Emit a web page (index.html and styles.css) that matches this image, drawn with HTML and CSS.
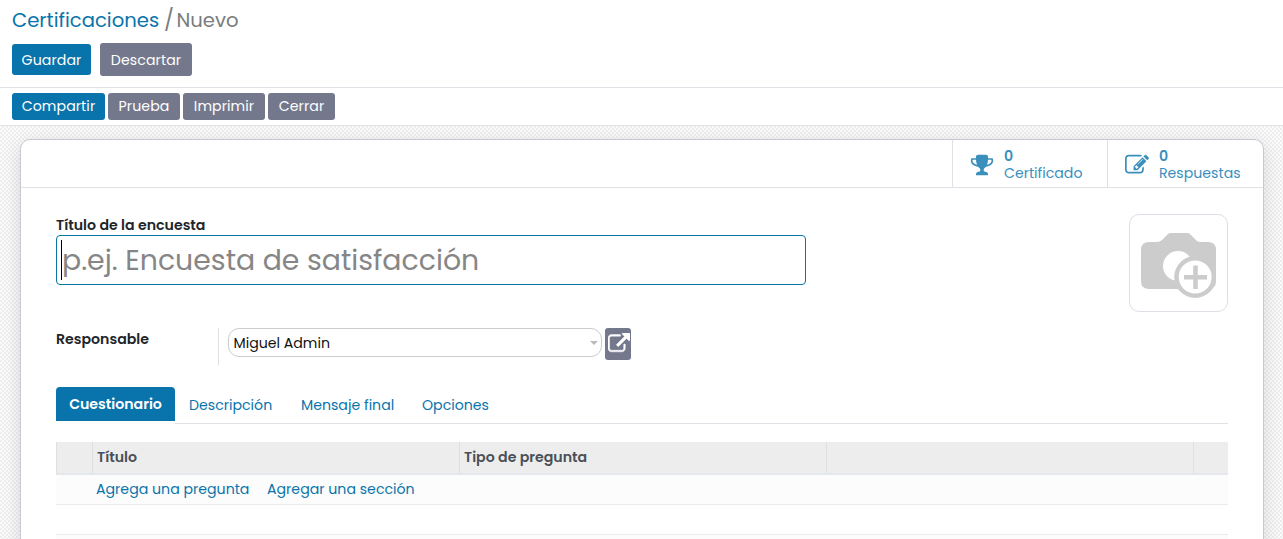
FILE: index.html
```html
<!DOCTYPE html>
<html lang="es">
<head>
<meta charset="utf-8">
<title>Certificaciones</title>
<link rel="stylesheet" href="styles.css">
</head>
<body>
<header class="control-panel">
  <nav class="breadcrumb"><a class="crumb">Certificaciones</a><span class="slash">/</span><span class="current">Nuevo</span></nav>
  <div class="actions">
    <button class="btn primary save">Guardar</button>
    <button class="btn discard">Descartar</button>
  </div>
</header>
<div class="statusbar">
  <button class="btn primary share">Compartir</button>
  <button class="btn test">Prueba</button>
  <button class="btn print">Imprimir</button>
  <button class="btn close">Cerrar</button>
</div>
<main class="content">
  <section class="sheet">
    <div class="button-box">
      <a class="stat">
        <svg class="stat-icon" viewBox="0 0 1792 1792"><path d="M522 883q-74-162-74-371h-256v96q0 78 94.500 162t235.500 113zm1078-275v-96h-256q0 209-74 371 141-29 235.500-113t94.500-162zm128-128v128q0 71-41.500 143t-112 130-173 97.500-215.500 44.500q-42 54-95 95-38 34-52.500 72.500t-14.500 89.500q0 54 30.500 91t97.500 37q75 0 133.500 45.500t58.500 114.500v64q0 14-9 23t-23 9h-832q-14 0-23-9t-9-23v-64q0-69 58.500-114.500t133.500-45.500q67 0 97.500-37t30.500-91q0-51-14.500-89.500t-52.500-72.500q-53-41-95-95-113-5-215.500-44.500t-173-97.500-112-130-41.500-143v-128q0-40 28-68t68-28h288v-96q0-66 47-113t113-47h576q66 0 113 47t47 113v96h288q40 0 68 28t28 68z"/></svg>
        <span class="stat-text"><b>0</b><span class="stat-label cert">Certificado</span></span>
      </a>
      <a class="stat">
        <svg class="stat-icon" viewBox="0 0 1792 1792"><path d="M888 1184l116-116-152-152-116 116v56h96v96h56zm440-720q-16-16-33 1l-350 350q-17 17-1 33t33-1l350-350q17-17 1-33zm80 594v190q0 119-84.500 203.500t-203.500 84.500h-832q-119 0-203.500-84.500t-84.500-203.500v-832q0-119 84.500-203.500t203.500-84.500h832q63 0 117 25 15 7 18 23 3 17-9 29l-49 49q-14 14-32 8-23-6-45-6h-832q-66 0-113 47t-47 113v832q0 66 47 113t113 47h832q66 0 113-47t47-113v-126q0-13 9-22l64-64q15-15 35-7t20 29zm-96-738l288 288-672 672h-288v-288zm444 132l-92 92-288-288 92-92q28-28 68-28t68 28l152 152q28 28 28 68t-28 68z"/></svg>
        <span class="stat-text"><b>0</b><span class="stat-label resp">Respuestas</span></span>
      </a>
    </div>
    <div class="form">
      <div class="heading">
        <div class="title-field">
          <label class="label title-label">Título de la encuesta</label>
          <div class="title-input"><span class="caret"></span><span class="placeholder">p.ej. Encuesta de satisfacción</span></div>
        </div>
        <div class="avatar">
          <svg viewBox="0 0 97 96">
            <path fill="#ccc" d="M19 27H27Q30 27 32 25L38 19Q39 18 41 18H57Q59 18 60 19L67 26Q68 27 71 27H78Q86 27 86 35V66Q86 74 78 74H19Q11 74 11 66V35Q11 27 19 27Z"/>
            <circle cx="48" cy="51" r="15" fill="#fff"/>
            <circle cx="65.200" cy="62" r="18.700" fill="#fff" stroke="#ccc" stroke-width="4.500"/>
            <path d="M65.500 50.500V74M54 62.300H77" stroke="#ccc" stroke-width="4.600"/>
          </svg>
        </div>
      </div>
      <div class="group">
        <label class="label resp-label">Responsable</label>
        <div class="field">
          <div class="select"><span class="miguel">Miguel Admin</span><i class="arrow"></i></div>
          <button class="external"><svg viewBox="0 0 1792 1792"><path d="M1408 928v320q0 119-84.500 203.500t-203.500 84.500h-832q-119 0-203.500-84.500t-84.500-203.500v-832q0-119 84.500-203.500t203.500-84.500h704q14 0 23 9t9 23v64q0 14-9 23t-23 9h-704q-66 0-113 47t-47 113v832q0 66 47 113t113 47h832q66 0 113-47t47-113v-320q0-14 9-23t23-9h64q14 0 23 9t9 23zm384-864v512q0 26-19 45t-45 19-45-19l-176-176-652 652q-10 10-23 10t-23-10l-114-114q-10-10-10-23t10-23l652-652-176-176q-19-19-19-45t19-45 45-19h512q26 0 45 19t19 45z"/></svg></button>
        </div>
      </div>
      <nav class="tabs">
        <a class="tab active">Cuestionario</a>
        <div class="tab-rest"><a class="tab t-desc">Descripción</a><a class="tab t-msg">Mensaje final</a><a class="tab t-opt">Opciones</a></div>
      </nav>
      <div class="table">
        <div class="thead"><span></span><span class="h-title">Título</span><span class="h-type">Tipo de pregunta</span><span></span><span></span></div>
        <div class="row links"><a class="add-q">Agrega una pregunta</a><a class="add-s">Agregar una sección</a></div>
        <div class="row blank"></div>
        <div class="row links"></div>
      </div>
    </div>
  </section>
</main>
</body>
</html>
```
FILE: styles.css
```css
* { box-sizing: border-box; }
body {
  margin: 0;
  height: 539px;
  overflow: hidden;
  background: #fff;
  color: #212529;
  font: 14.15px/21px Poppins, Inter, "Noto Sans", sans-serif;
  white-space: nowrap;
}
a { color: #0874ab; }
.control-panel { height: 88px; padding: 5px 12px 0; border-bottom: 1px solid #dee2e6; }
.breadcrumb { display: flex; height: 30px; font-size: 19.6px; line-height: 30px; color: #797c80; }
.crumb { width: 147px; }
.slash { width: 17.5px; padding-left: 5px; font-size: 21px; }
.actions { display: flex; align-items: center; gap: 9px; height: 33px; margin-top: 8px; }
.btn {
  height: 27px;
  padding: 0;
  border: 0;
  border-radius: 3px;
  background: #74788d;
  color: #fff;
  font: inherit;
  letter-spacing: 0.08px;
}
.btn.primary { background: #0874ab; }
.btn.save { width: 79px; height: 31px; padding-top: 1px; }
.btn.discard { width: 92px; height: 33px; padding-top: 1px; }
.statusbar { display: flex; gap: 3px; height: 38px; padding: 5px 12px; border-bottom: 1px solid #dee2e6; }
.share { width: 93px; }
.test { width: 72px; }
.print { width: 82px; }
.close { width: 67px; }
.content {
  height: 413px;
  padding: 13px 19px 0 20px;
  overflow: hidden;
  background: repeating-conic-gradient(#eee 0 25%, #fbfbfb 0 50%) 0 0 / 4px 4px;
}
.sheet {
  height: 460px;
  border: 1px solid #c8c8d3;
  border-radius: 10px;
  background: #fff;
  box-shadow: 0 5px 20px rgba(0, 0, 0, 0.13);
}
.button-box { display: flex; justify-content: flex-end; height: 48px; border-bottom: 1px solid #dee2e6; }
.stat { display: flex; width: 155px; padding: 7px 0 0 17px; border-left: 1px solid #dee2e6; color: #3a8fbc; }
.stat + .stat { width: 156px; }
.stat-icon { width: 24px; height: 24px; margin-top: 6px; fill: currentColor; }
.stat-text { display: flex; flex-direction: column; margin: 1px 0 0 10px; line-height: 17px; }
.stat-text b { font-weight: 600; }
.form { padding: 26px 35px 0; }
.heading { display: flex; justify-content: space-between; }
.title-field { width: 750px; }
.label { padding-top: 1px; font-weight: 600; }
.title-label { display: block; height: 21px; }
.title-input {
  display: flex;
  align-items: center;
  height: 50px;
  padding-left: 4px;
  border: 1px solid #0874ab;
  border-radius: 4px;
  color: #868686;
  font-size: 28.35px;
}
.caret { width: 1px; height: 40px; background: #000; }
.avatar { width: 99px; height: 98px; border: 1px solid #dedee7; border-radius: 10px; }
.avatar svg { display: block; width: 97px; height: 96px; }
.group { display: flex; height: 37px; margin-top: 16px; }
.resp-label { width: 162px; }
.field { display: flex; gap: 3px; padding-left: 9px; border-left: 1px solid #dee2e6; }
.select {
  display: flex;
  align-items: center;
  justify-content: space-between;
  width: 374px;
  height: 29px;
  padding: 0 3px 0 4.5px;
  border: 1px solid #ccc;
  border-radius: 11px;
  color: #111;
}
.miguel { padding-top: 2px; }
.arrow { border: 4px solid transparent; border-top-color: #bbb; border-bottom: 0; }
.external { width: 26px; height: 32px; padding: 4px 0 0 3px; border: 0; border-radius: 3px; background: #74788d; overflow: hidden; }
.external svg { display: block; width: 22px; height: 22px; margin-top: -5px; fill: #fff; stroke: #fff; stroke-width: 40; }
.tabs { display: flex; height: 37px; margin-top: 22px; }
.tab.active { width: 119px; height: 34px; border-radius: 4px 4px 0 0; background: #0874ab; color: #fff; font-weight: 600; line-height: 34px; text-align: center; }
.tab-rest { display: flex; flex: 1; padding-left: 14px; border-bottom: 1px solid #dee2e6; line-height: 36px; }
.t-desc { width: 112px; }
.t-msg { width: 121px; }
.table { margin-top: 18px; }
.thead {
  display: grid;
  grid-template-columns: 36px 367px 367px 367px 1fr;
  height: 33px;
  border-bottom: 2px solid #e4e8ec;
  background: #ededed;
  color: #495057;
  font-weight: 600;
  line-height: 30px;
}
.thead span { padding-left: 4px; border-left: 1px solid #dedfe1; }
.row { height: 30px; border-bottom: 1px solid #e9ebed; background: #fff; }
.links { display: flex; padding-left: 40px; background: #fcfcfc; line-height: 29px; }
.add-q { width: 171px; }
```
